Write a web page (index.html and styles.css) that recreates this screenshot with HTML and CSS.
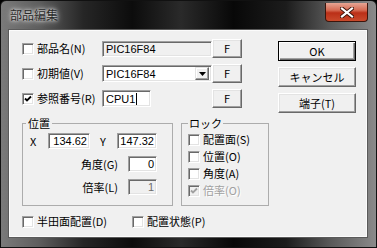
FILE: index.html
```html
<!DOCTYPE html>
<html>
<head>
  <meta charset="utf-8">
  <title>部品編集</title>
  <link rel="stylesheet" href="styles.css">
</head>
<body>
<div class="window">
  <div class="titlebar">
    <span class="title">部品編集</span>
    <span class="close"><svg width="14" height="11" viewBox="0 0 14 11"><path d="M2 1.5 L12 9.5 M12 1.5 L2 9.5" stroke="#3a1208" stroke-width="4" stroke-linecap="square"/><path d="M2 1.5 L12 9.5 M12 1.5 L2 9.5" stroke="#fff" stroke-width="2.2" stroke-linecap="square"/></svg></span>
  </div>
  <div class="client">
    <div class="main">
      <div class="rows">
        <div class="row">
          <span class="chk"></span><span class="lbl">部品名(N)</span>
          <span class="cell"><span class="edit ro">PIC16F84</span></span>
          <button class="btn f">F</button>
        </div>
        <div class="row">
          <span class="chk"></span><span class="lbl">初期値(V)</span>
          <span class="cell"><span class="edit combo">PIC16F84<span class="drop"><svg width="7" height="4" viewBox="0 0 7 4"><path d="M0 0 H7 L3.5 4 Z" fill="#000"/></svg></span></span></span>
          <button class="btn f">F</button>
        </div>
        <div class="row">
          <span class="chk on"><svg width="8" height="8" viewBox="0 0 8 8"><path d="M1 3.5 L3 5.5 L7 1.5" fill="none" stroke="#000" stroke-width="1.8"/></svg></span><span class="lbl">参照番号(R)</span>
          <span class="cell"><span class="edit ref">CPU1<span class="caret"></span></span></span>
          <button class="btn f">F</button>
        </div>
      </div>
      <div class="groups">
        <fieldset class="grp pos">
          <legend>位置</legend>
          <div class="prow">
            <span class="plbl px">X</span><span class="edit num w42">134.62</span>
            <span class="plbl py">Y</span><span class="edit num w40">147.32</span>
          </div>
          <div class="prow">
            <span class="plbl">角度(G)</span><span class="edit num w29">0</span>
          </div>
          <div class="prow">
            <span class="plbl">倍率(L)</span><span class="edit num w29 dis">1</span>
          </div>
        </fieldset>
        <fieldset class="grp lock">
          <legend>ロック</legend>
          <div class="lrow"><span class="chk"></span><span>配置面(S)</span></div>
          <div class="lrow"><span class="chk"></span><span>位置(O)</span></div>
          <div class="lrow"><span class="chk"></span><span>角度(A)</span></div>
          <div class="lrow off"><span class="chk on"><svg width="8" height="8" viewBox="0 0 8 8"><path d="M1 3.5 L3 5.5 L7 1.5" fill="none" stroke="#a0a0a0" stroke-width="1.8"/></svg></span><span>倍率(O)</span></div>
        </fieldset>
      </div>
      <div class="opts">
        <div class="opt first"><span class="chk"></span><span>半田面配置(D)</span></div>
        <div class="opt"><span class="chk"></span><span>配置状態(P)</span></div>
      </div>
    </div>
    <div class="side">
      <button class="btn def">OK</button>
      <button class="btn">キャンセル</button>
      <button class="btn">端子(T)</button>
    </div>
  </div>
</div>
</body>
</html>
```

FILE: styles.css
```css
body {margin:0; background:#000; font-family:"Noto Sans CJK JP", "Liberation Sans", sans-serif; font-size:11px;}

.window {width:377px; height:248px; box-sizing:border-box; display:flex; flex-direction:column;
  border-radius:6px 6px 0 0; border:1px solid #111;
  background:linear-gradient(90deg, #7a7a7a 0%, #5e5e5e 10%, #262626 22%, #0c0c0c 35%, #2a2a2a 48%, #080808 62%, #1c1c1c 76%, #5a5a5a 88%, #8a8a8a 100%);}

.titlebar {height:29px; display:flex; justify-content:space-between; align-items:flex-start;}
.title {margin:7px 0 0 9px; font-size:12px; line-height:14px; color:#2a2a2a;
  text-shadow:0 0 6px #fff, 0 0 3px rgba(255,255,255,.8);}
.close {margin:2px 8px 0 0; width:43px; height:19px; box-sizing:border-box; display:flex; align-items:center; justify-content:center;
  border:1px solid #3b150c; border-top:none; border-radius:0 0 4px 4px;
  background:linear-gradient(#e6a594 0%, #d56a52 40%, #bb2f17 55%, #c94a2c 100%);}

.client {margin:0 9px 10px 8px; flex:1; display:flex; background:#f0f0f0; border:1px solid #fbfbfb;
  box-shadow:0 0 0 1px #5a5a5a; padding:0 10px 0 12px; color:#000;}
.main {width:256px;}
.side {width:78px; padding-top:10px; display:flex; flex-direction:column; gap:6px;}

.rows {padding-top:8px; display:flex; flex-direction:column; gap:6px;}
.row {display:flex; align-items:center; height:19px;}
.lbl {width:65px; line-height:13px; margin-left:3px; white-space:nowrap;}
.cell {width:110px; display:flex;}
.f {margin-left:11px; width:30px; height:19px;}

.chk {width:12px; height:12px; box-sizing:border-box; background:#fff; flex:none; display:flex; align-items:center; justify-content:center;
  border:1px solid; border-color:#a0a0a0 #fff #fff #a0a0a0; box-shadow:inset 1px 1px #696969, inset -1px -1px #e3e3e3;}

.edit {height:16px; box-sizing:border-box; background:#fff; display:flex; align-items:center; padding:0 3px;
  font-family:"Liberation Sans", sans-serif; font-size:11px;
  border:1px solid; border-color:#a0a0a0 #fff #fff #a0a0a0; box-shadow:inset 1px 1px #696969, inset -1px -1px #e3e3e3;}
.ro {width:110px; background:#f0f0f0;}
.combo {width:110px; height:17px; padding-right:2px; justify-content:space-between;}
.drop {width:14px; height:13px; box-sizing:border-box; display:flex; align-items:center; justify-content:center; background:#f0f0f0;
  border:1px solid; border-color:#e3e3e3 #696969 #696969 #e3e3e3; box-shadow:inset -1px -1px #a0a0a0, inset 1px 1px #fff;}
.ref {width:49px; height:17px;}
.caret {width:1px; height:12px; background:#000; margin-left:1px;}

.btn {margin:0; padding:0; height:20px; box-sizing:border-box; background:#f0f0f0; color:#000;
  font-family:"Noto Sans CJK JP", "Liberation Sans", sans-serif; font-size:11px; line-height:13px;
  border:1px solid; border-color:#fff #696969 #696969 #fff; box-shadow:inset -1px -1px #a0a0a0, inset 1px 1px #e3e3e3;}
.btn.f {height:19px;}
.btn.def {border-color:#000; box-shadow:inset 1px 1px #fff, inset -1px -1px #696969, inset -2px -2px #a0a0a0;}

.groups {margin-top:9px; display:flex; gap:8px;}
.grp {flex:none; margin:0; padding:0; height:89px; box-sizing:border-box; border:1px solid #acacac; min-width:0;}
.grp legend {font-size:11px; line-height:12px; padding:0 2px;}
.pos {width:151px; padding:4px 15px 0 0; display:flex; flex-direction:column; gap:7px;}
.pos legend {margin-left:3px;}
.lock {width:88px; padding:2px 0 0 6px;}
.lock legend {padding:0 1px;}

.prow {display:flex; justify-content:flex-end; align-items:center; height:16px;}
.plbl {line-height:13px; margin-right:10px;}
.px {width:18px; margin-right:0;}
.py {width:17px; margin:0 0 0 10px;}
.num {justify-content:flex-end; padding:0 2px;}
.w42 {width:42px;}
.w40 {width:40px;}
.w29 {width:29px;}
.dis {background:#f0f0f0; color:#6d6d6d;}

.lrow {display:flex; align-items:center; height:17px; gap:3px; line-height:13px;}
.lrow.off {color:#a0a0a0; text-shadow:1px 1px #fff;}
.lrow.off .chk {background:#f0f0f0;}

.opts {margin-top:8px; display:flex; height:15px; align-items:center;}
.opt {display:flex; align-items:center; gap:3px; line-height:13px;}
.opt.first {width:110px;}
```
